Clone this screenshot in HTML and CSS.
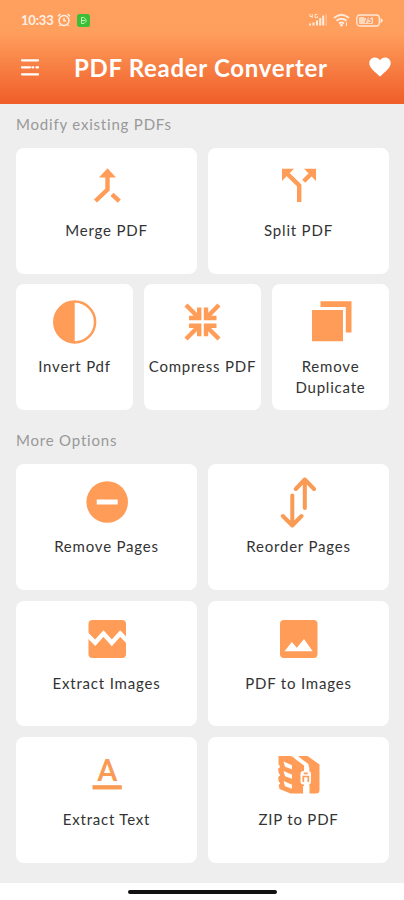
FILE: index.html
```html
<!DOCTYPE html>
<html lang="en">

<head>
    <meta charset="UTF-8" />
    <meta name="viewport" content="width=device-width, initial-scale=1.0" />
    <title>PDF Reader Converter</title>
    <link rel="stylesheet" href="styles.css">
</head>

<body>
    <header class="header">
        <div class="status-bar">
            <span class="time">10:33</span>
            <svg class="alarm" width="14" height="14" viewBox="0 0 14 14">
                <circle cx="7" cy="7.5" r="5" />
                <path d="M1 3.2 3.4 1M13 3.2 10.6 1M7 5v2.7h2M3.2 11.8 2.4 13M10.8 11.8l.8 1.2" />
            </svg>
            <svg class="app-badge" width="13" height="13" viewBox="0 0 13 13">
                <rect width="13" height="13" rx="2.5" fill="#3bbf38" />
                <path d="M4.5 9.5v-6h2.2L9 5.5v2L7 9.5zM4.5 6.5H8" fill="none" stroke="#c4f2b5" />
            </svg>
            <div class="status-right">
                <svg width="18" height="14" viewBox="0 0 18 14">
                    <path d="M1 12.5v-2M4.5 12.5V9.500M8 12.5V7.5M11.2 12.5V5M14.2 12.5V2.5" stroke="#ffe9da" stroke-width="2.1" />
                    <path d="M17.2 13V1" stroke="#ffd0ad" stroke-width=".8" />
                    <path d="M1 1v2.5h2.3M3.3 1v4M8.5 1.5H6v3h2.5V3" fill="none" stroke="#ffe9da" stroke-width=".9" />
                </svg>
                <svg width="17" height="14" viewBox="0 0 17 14">
                    <path d="M1 5q7.5-6.5 15 0M3.5 7.8q5-4 10 0M6 10.4q2.5-2 5 0" fill="none" stroke="#ffe9da" stroke-width="1.9" />
                    <circle cx="8.5" cy="12.2" r="1.4" fill="#ffe9da" />
                    <path d="M13.5 9v4" stroke="#ffe9da" />
                </svg>
                <svg width="27" height="13" viewBox="0 0 27 13">
                    <rect x=".8" y="1" width="22.5" height="11" rx="3" fill="none" stroke="#ffe9da" stroke-width="1.3" />
                    <rect x="3" y="3" width="14" height="7" rx="1" fill="#ffd9bd" />
                    <path d="M25 4.5v4l1.500-2z" fill="#ffe9da" stroke="#ffe9da" />
                    <text x="8" y="9.3" class="battery">75</text>
                </svg>
            </div>
        </div>
        <div class="toolbar">
            <svg class="menu" width="19" height="18" viewBox="0 0 19 18">
                <path d="M2 2.3h16M2 9.3h8M12.500 9.3h.8M16.500 9.3H18M2 16.300h16" />
            </svg>
            <h1>PDF Reader Converter</h1>
            <svg class="heart" width="22" height="20" viewBox="0 0 22 20">
                <path d="M11 19.600 9.200 18C3.500 13 .3 10 .3 6.100.3 3 2.700.600 5.800.600c2 0 4 1 5.200 2.700C12.200 1.600 14.200.600 16.200.600c3.100 0 5.500 2.400 5.500 5.500 0 3.900-3.200 6.900-8.900 11.900z" fill="#fff" />
            </svg>
        </div>
    </header>

    <main class="content">
        <h2>Modify existing PDFs</h2>
        <div class="row two">
            <div class="card">
                <svg class="icon" viewBox="0 0 44 44">
                    <path class="fill" d="M22.5 4.3 31 13.5H14z" />
                    <path class="line" d="M22.5 12v13.500L10.5 37M27 30.300l7.300 6.900" />
                </svg>
                <span>Merge PDF</span>
            </div>
            <div class="card">
                <svg class="icon" viewBox="0 0 44 44">
                    <path class="fill" d="M5 4.800h12L5 17zM27 4.800h12V17z" />
                    <path class="line" d="M9.500 9 22.200 21.500V38M35 9l-8.300 8.300" />
                </svg>
                <span>Split PDF</span>
            </div>
        </div>
        <div class="row three">
            <div class="card">
                <svg class="icon" viewBox="0 0 44 44">
                    <circle class="thin" cx="21.700" cy="22" r="20.400" />
                    <path class="fill" d="M21.700 1.500a20.500 20.500 0 0 0 0 41z" />
                </svg>
                <span>Invert Pdf</span>
            </div>
            <div class="card">
                <svg class="icon" viewBox="0 0 44 44">
                    <path class="line" d="M5 5l13 13M8 18h10.200V7.500M38 5 25 18M35.500 18H25V7.500M5 39l13-13M8 25.800h10.200v10.500M38 39 25 26M35.500 25.800H25v10.500" />
                </svg>
                <span>Compress PDF</span>
            </div>
            <div class="card">
                <svg class="icon" viewBox="0 0 44 44">
                    <path class="fill" d="M3 10h31v31.300H3zM11.500 1.300h31v31.200h-5.700V7H11.500z" />
                </svg>
                <span>Remove Duplicate</span>
            </div>
        </div>

        <h2 class="more">More Options</h2>
        <div class="row two">
            <div class="card">
                <svg class="icon" viewBox="0 0 44 44">
                    <circle class="fill" cx="22.200" cy="22" r="20.800" />
                    <path d="M11.700 22h21" stroke="#fff" stroke-width="5" />
                </svg>
                <span>Remove Pages</span>
            </div>
            <div class="card">
                <svg class="icon" viewBox="0 0 44 44">
                    <path class="round" d="M27.800 28V-.5M18.800 9l9-9.500L37 9M15.300 15.500v30M5.800 36l9.500 9.500L24.500 36" />
                </svg>
                <span>Reorder Pages</span>
            </div>
        </div>
        <div class="row two">
            <div class="card">
                <svg class="icon" viewBox="0 0 44 44">
                    <rect class="fill" x="3.5" y="3" width="37.500" height="38" rx="4" />
                    <path d="M1.500 17 10.200 25.800l8.300-9.200 8.300 9.200 8.400-9.200 7.300 7.700" fill="none" stroke="#fff" stroke-width="4.500" />
                </svg>
                <span>Extract Images</span>
            </div>
            <div class="card">
                <svg class="icon" viewBox="0 0 44 44">
                    <rect class="fill" x="3" y="3" width="37.500" height="38" rx="4" />
                    <path d="M7.500 34.300 14.800 25l5 5.800L27 22l8.700 12.300z" fill="#fff" />
                </svg>
                <span>PDF to Images</span>
            </div>
        </div>
        <div class="row two">
            <div class="card">
                <svg class="icon" viewBox="0 0 44 44">
                    <text x="22.300" y="27.800" class="letter">A</text>
                    <path d="M7.500 34.300h29.300" stroke="#f99a55" stroke-width="4.300" />
                </svg>
                <span>Extract Text</span>
            </div>
            <div class="card">
                <svg class="icon" viewBox="0 0 44 44">
                    <path class="fill" d="M1.500 3H14l13 7.500v30H13.500L2.500 36l-.8-4 1.600-1.500L1.500 28l-.3-4 2-1.800-1.700-2.700-.3-4 2-1.500L1.500 11z" />
                    <path class="fill" d="M21 3h9.500l12 8.500V37q0 3.500-3.500 3.500h-6.700V14z" />
                    <path d="M6.500 8.500l8.500 3.800v3.900l-7-2.500zM6.500 18l8.500 3.800v3.900l-7-2.500zM6.500 28l8.500 3.800v3.900l-7-2.500z" fill="#fff" />
                    <path d="M21 3.500 31.500 11v6.500h-3.800V13L17.500 5.500M26 33h6.300v7.500H26z" fill="#fff" />
                    <rect x="23.500" y="18" width="10.500" height="13.500" rx="3" fill="#fff" />
                    <path d="M26.300 29v-5.500h5V29M26.800 20.300h4" fill="none" stroke="#ff9c57" stroke-width="1.700" />
                </svg>
                <span>ZIP to PDF</span>
            </div>
        </div>
    </main>

    <footer class="nav-bar">
        <div class="handle"></div>
    </footer>
</body>

</html>
```

FILE: styles.css
```css
*,
::after,
::before {
    box-sizing: border-box;
    padding: 0;
    margin: 0;
}

body {
    width: 404px;
    height: 900px;
    display: flex;
    flex-direction: column;
    overflow: hidden;
    background-color: white;
    font-family: Lato, "Open Sans", sans-serif;
}

.header {
    height: 104px;
    background: linear-gradient(#ffa05e 0, #ff9f5d 32px, #f05f2a 102px);
    color: white;
}

.status-bar {
    height: 40px;
    padding: 0 21px;
    display: flex;
    align-items: center;
}

.time {
    width: 36px;
    color: #fff0e6;
    font-size: 13px;
    font-weight: bold;
    letter-spacing: -0.2px;
}

.alarm {
    fill: none;
    stroke: #fff0e6;
    stroke-width: 1.4;
}

.app-badge {
    margin-left: 6px;
}

.status-right {
    margin-left: auto;
    display: flex;
    align-items: center;
    gap: 6px;
}

.battery {
    fill: #f58b4d;
    font-size: 7px;
    font-weight: bold;
}

.toolbar {
    height: 54px;
    padding: 0 13px 0 20px;
    display: flex;
    align-items: center;
}

.menu {
    stroke: white;
    stroke-width: 2.3;
    stroke-linecap: round;
}

h1 {
    margin-left: 35px;
    flex: 1;
    font-size: 24px;
    font-weight: bold;
    white-space: nowrap;
    letter-spacing: 0.7px;
}

.content {
    height: 779px;
    padding: 0 15px 0 16px;
    background-color: #eeeeee;
}

h2 {
    height: 44px;
    padding-top: 10px;
    color: #999999;
    font-size: 15px;
    font-weight: normal;
    line-height: 20px;
    letter-spacing: 0.8px;
}

.more {
    height: 44.5px;
}

.row {
    display: grid;
    gap: 11px;
    height: 125.5px;
    margin-bottom: 11px;
}

.two {
    grid-template-columns: 1fr 1fr;
}

.three {
    grid-template-columns: 1fr 1fr 1fr;
    margin-top: -0.5px;
    margin-bottom: 10px;
}

.card {
    padding-top: 16px;
    display: flex;
    flex-direction: column;
    align-items: center;
    gap: 12px;
    border-radius: 8px;
    background-color: white;

    span {
        color: #333333;
        font-size: 15px;
        line-height: 20.5px;
        letter-spacing: 0.8px;
        text-align: center;
    }
}

.icon {
    width: 44px;
    height: 44px;
    flex-shrink: 0;
    overflow: visible;
}

.fill {
    fill: #ff9c57;
}

.line,
.thin,
.round {
    fill: none;
    stroke: #ff9c57;
    stroke-width: 4.4;
}

.thin {
    stroke-width: 2.5;
}

.round {
    stroke: #f99a55;
    stroke-width: 4;
    stroke-linecap: round;
    stroke-linejoin: round;
}

.letter {
    fill: #f99a55;
    font-family: Roboto, sans-serif;
    font-size: 31px;
    font-weight: 500;
    text-anchor: middle;
}

.nav-bar {
    padding-top: 7px;
    display: flex;
    justify-content: center;
}

.handle {
    width: 149px;
    height: 4px;
    border-radius: 2px;
    background-color: #111111;
}
```
